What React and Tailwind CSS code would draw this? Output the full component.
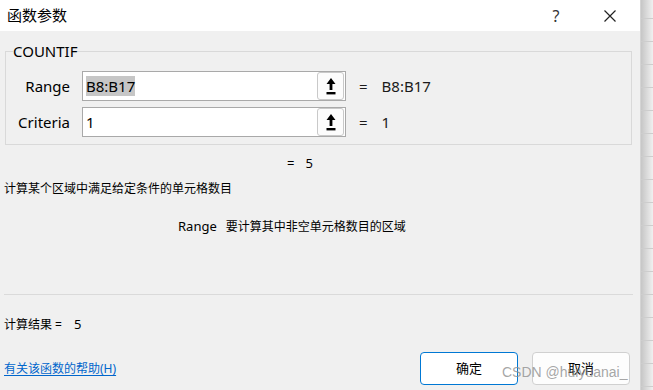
import React from 'react';

const FONT = { fontFamily: '"Noto Sans", "Noto Sans CJK SC", sans-serif' };

// up-arrow-with-bar glyph used by the range picker buttons
const PickIcon = () => (
  <svg width="10" height="17" viewBox="0 0 10 17">
    <path d="M5 0 L9.5 6 L6.4 6 L6.4 12 L3.6 12 L3.6 6 L0.5 6 Z" fill="#000" />
    <rect x="0.5" y="14" width="9" height="2.4" fill="#000" />
  </svg>
);

const ArgRow = ({ label, value, result, selected }) => (
  <div className="flex items-center h-[30px]">
    <div className="w-[64px] text-right text-[15px] text-black">{label}</div>
    <div className="ml-[12px] w-[264px] h-[30px] bg-white border border-[#a9a9a9] flex items-center">
      <div className="flex-1 pl-[3px] text-[15px] text-black">
        <span className={selected ? 'bg-[#c6c6c6] leading-[20px] inline-block' : 'leading-[20px] inline-block'}>
          {value}
        </span>
      </div>
      <div className="w-[27px] h-[28px] mr-px flex items-center justify-center rounded-[3px] border border-[#c9c9c9] bg-[#fcfcfc]">
        <PickIcon />
      </div>
    </div>
    <div className="ml-[13px] text-[15px] text-[#1b1b1b]">=</div>
    <div className="ml-[14px] text-[15px] text-[#1b1b1b]">{result}</div>
  </div>
);

export default function App() {
  const lines = Array.from({ length: 17 });

  return (
    <div className="w-[653px] h-[390px] flex overflow-hidden relative" style={FONT}>
      <div className="w-[641px] h-full flex flex-col bg-[#f0f0f0] border-r border-[#d4d4d4]">
        {/* title bar */}
        <div className="h-[31px] bg-white flex items-center shrink-0">
          <div className="pl-[7px] text-[15px] text-black flex-1">函数参数</div>
          <div className="w-[20px] text-center text-[16px] text-[#333] mr-[38px]">?</div>
          <svg width="12" height="12" viewBox="0 0 12 12" className="mr-[24px]">
            <path d="M0.5 0.5 L11.5 11.5 M11.5 0.5 L0.5 11.5" stroke="#222" strokeWidth="1.2" />
          </svg>
        </div>

        {/* argument group */}
        <fieldset className="mt-[10px] ml-[5px] w-[627px] border border-[#d9d9d9] pt-[10px] pb-[7px]">
          <legend className="ml-[7px] text-[15px] leading-[20px] text-black">COUNTIF</legend>
          <div className="flex flex-col gap-[6px]">
            <ArgRow label="Range" value="B8:B17" result="B8:B17" selected />
            <ArgRow label="Criteria" value="1" result="1" />
          </div>
        </fieldset>

        <div className="mt-[9px] h-[20px] flex items-center pl-[287px] text-[13px] text-black">
          <span>=</span>
          <span className="ml-[11px]">5</span>
        </div>

        <div className="mt-[5px] h-[20px] flex items-center pl-[4px] text-[12px] text-black">
          计算某个区域中满足给定条件的单元格数目
        </div>

        <div className="mt-[18px] h-[20px] flex items-center pl-[178px] text-[12px] text-black">
          <span className="text-[13px]">Range</span>
          <span className="ml-[9px]">要计算其中非空单元格数目的区域</span>
        </div>

        <div className="mt-[57px] ml-[4px] w-[629px] h-px bg-[#dadada]" />

        <div className="mt-[20px] h-[20px] flex items-center pl-[4px] text-[12px] text-black">
          <span>计算结果 =</span>
          <span className="ml-[12px] text-[13px]">5</span>
        </div>

        <div className="mt-[17px] h-[33px] flex items-center">
          <a className="pl-[4px] text-[12px] text-[#0066cc] underline underline-offset-2 flex-1">
            有关该函数的帮助(H)
          </a>
          <button className="w-[98px] h-[33px] rounded-[4px] border border-[#0078d4] bg-white text-[13px] text-black">
            确定
          </button>
          <button className="ml-[14px] mr-[10px] w-[98px] h-[33px] rounded-[4px] border border-[#d0d0d0] bg-[#fdfdfd] text-[13px] text-black">
            取消
          </button>
        </div>
      </div>

      {/* sheet grid peeking behind the dialog */}
      <div className="flex-1 h-full bg-linear-to-r from-[#c6c6c6] to-[#f0f0f0] flex flex-col pt-[18px]">
        {lines.map((_, i) => (
          <div key={i} className="h-[23px] shrink-0 border-t border-[#cdcdcd]" />
        ))}
      </div>

      {/* watermark */}
      <div
        className="absolute left-[502px] top-[362px] text-[14px] text-[#8f8f8f]/80 pointer-events-none"
        style={{ fontFamily: '"Liberation Sans", sans-serif' }}
      >
        CSDN @huiyuanai_
      </div>
    </div>
  );
}
